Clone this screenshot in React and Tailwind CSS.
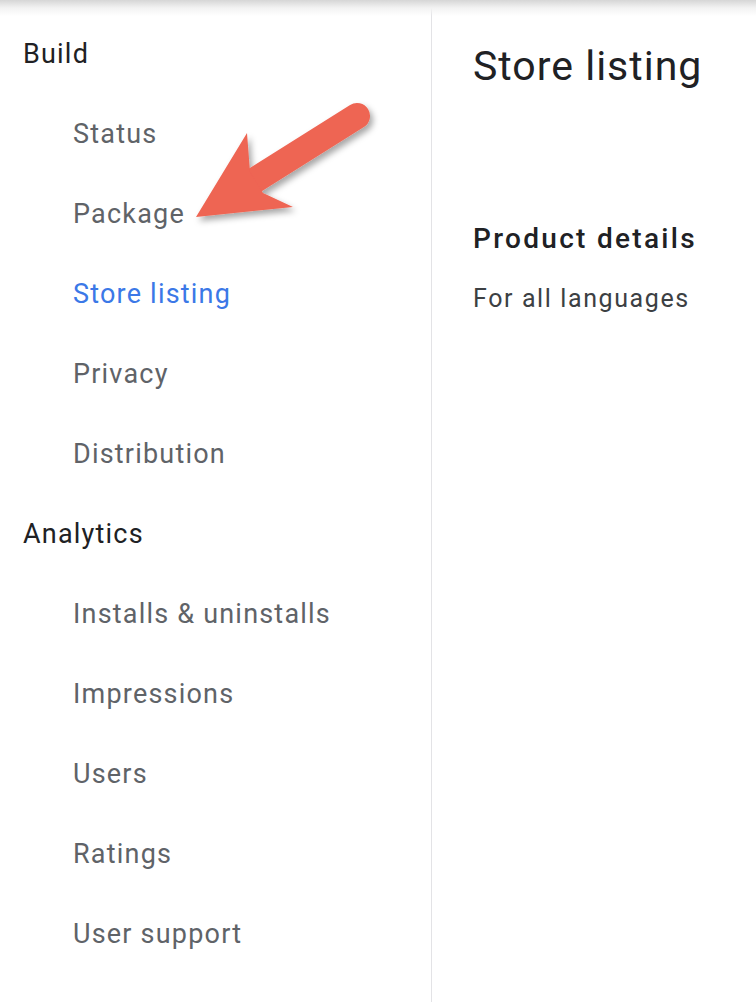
const build = ['Status', 'Package', 'Store listing', 'Privacy', 'Distribution'];
const analytics = ['Installs & uninstalls', 'Impressions', 'Users', 'Ratings', 'User support'];

function NavItem({ label }) {
  const active = label === 'Store listing';
  return (
    <div className={'h-[80px] flex items-center pl-[73px] text-[27px] tracking-[1.2px] ' + (active ? 'text-[#3b78e7]' : 'text-[#5f6368]')}>
      {label}
    </div>
  );
}

function Arrow() {
  return (
    <svg className="absolute left-[185px] top-[95px] pointer-events-none" width="200" height="140" viewBox="185 95 200 140">
      <defs>
        <filter id="sh" x="-20%" y="-20%" width="150%" height="150%">
          <feDropShadow dx="3" dy="4" stdDeviation="3" floodColor="#000" floodOpacity="0.35" />
        </filter>
      </defs>
      <g filter="url(#sh)" fill="#ee6553">
        <line x1="357" y1="116" x2="252" y2="182" stroke="#ee6553" strokeWidth="26" strokeLinecap="round" />
        <polygon points="196,217 247,133 250,172 263,193 293,207" />
      </g>
    </svg>
  );
}

export default function App() {
  return (
    <div className="relative flex min-h-[1002px] bg-white overflow-hidden" style={{ fontFamily: 'Roboto, "Noto Sans", sans-serif' }}>
      <div className="absolute inset-x-0 top-0 h-[16px] bg-gradient-to-b from-[#d6d6d6] via-[#f3f3f3] to-white/0 pointer-events-none" />
      <aside className="w-[432px] shrink-0 border-r border-[#e3e3e6] pt-[14px]">
        <div className="h-[80px] flex items-center pl-[23px] text-[27px] tracking-[1.2px] text-[#202124]">Build</div>
        {build.map((l) => <NavItem key={l} label={l} />)}
        <div className="h-[80px] flex items-center pl-[23px] text-[27px] tracking-[1.2px] text-[#202124]">Analytics</div>
        {analytics.map((l) => <NavItem key={l} label={l} />)}
      </aside>
      <main className="flex-1 pl-[41px]">
        <h1 className="text-[41px] tracking-[1px] text-[#202124] leading-none mt-[46px]">Store listing</h1>
        <h2 className="text-[28px] tracking-[2.3px] font-medium text-[#202124] leading-none mt-[138px]">Product details</h2>
        <p className="text-[25px] tracking-[1.6px] text-[#3c4043] leading-none mt-[33px]">For all languages</p>
      </main>
      <Arrow />
    </div>
  );
}
